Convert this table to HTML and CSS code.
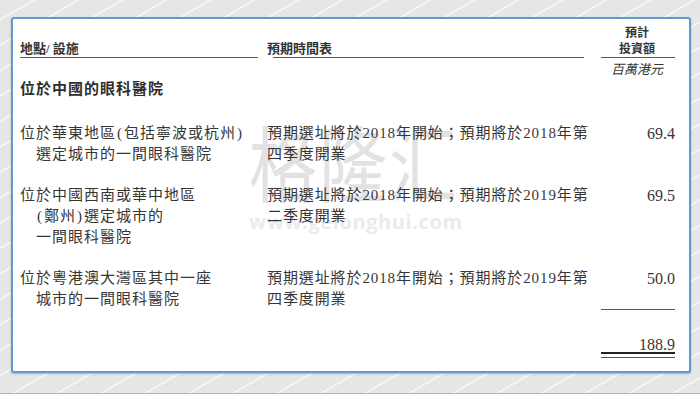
FILE: index.html
```html
<!DOCTYPE html>
<html lang="zh-Hant">
<head>
<meta charset="utf-8">
<title>眼科醫院投資計劃</title>
<link rel="stylesheet" href="styles.css">
</head>
<body>
<div class="card">
  <div class="watermark" aria-hidden="true">
    <div class="wm-cn">格隆汇</div>
    <div class="wm-url">www.gelonghui.com</div>
  </div>
  <div class="table">
    <div class="c1 head">地點/ 設施</div>
    <div class="c2 head head-shift">預期時間表</div>
    <div class="c3 head head-amt">預計<br>投資額</div>

    <div class="c3 unit">百萬港元</div>

    <div class="section">位於中國的眼科醫院</div>

    <div class="c1 loc">位於華東地區<span class="par">(</span>包括寧波或杭州<span class="par">)</span><br>選定城市的一間眼科醫院</div>
    <div class="c2 plan">預期選址將於2018年開始；預期將於2018年第<br>四季度開業</div>
    <div class="c3 amt">69.4</div>

    <div class="c1 loc gap">位於中國西南或華中地區<br><span class="par">(</span>鄭州<span class="par">)</span>選定城市的<br>一間眼科醫院</div>
    <div class="c2 plan gap">預期選址將於2018年開始；預期將於2019年第<br>二季度開業</div>
    <div class="c3 amt gap">69.5</div>

    <div class="c1 loc gap">位於粵港澳大灣區其中一座<br>城市的一間眼科醫院</div>
    <div class="c2 plan gap">預期選址將於2018年開始；預期將於2019年第<br>四季度開業</div>
    <div class="c3 amt gap subtotal">50.0</div>

    <div class="c3 amt total">188.9</div>
  </div>
</div>
</body>
</html>
```

FILE: styles.css
```css
html, body {
  margin: 0;
  padding: 0;
}

body {
  width: 700px;
  height: 394px;
  box-sizing: border-box;
  overflow: hidden;
  border-bottom: 1px solid #b4b4b4;
  background-color: #e6e6e6;
  background-image: repeating-linear-gradient(150deg, rgba(255,255,255,0) 0px, rgba(255,255,255,0) 16px, rgba(255,255,255,0.85) 17px, rgba(255,255,255,0) 18.5px, rgba(255,255,255,0) 22px);
  padding-top: 17px;
  padding-left: 11px;
  font-family: "Liberation Serif", "Noto Sans CJK TC", serif;
  color: #363636;
}

.card {
  position: relative;
  width: 680px;
  height: 356px;
  box-sizing: border-box;
  background: #ffffff;
  border: 2px solid #5e9bd6;
  border-radius: 3px;
  box-shadow: 0 1px 2px rgba(0,0,0,0.25);
  padding: 6px 14px 0 7px;
}

.watermark {
  position: absolute;
  left: 236px;
  top: 100px;
  z-index: 0;
  color: #e2e2e2;
  font-family: "Noto Sans CJK SC", sans-serif;
}

.wm-cn {
  font-size: 68px;
  font-weight: 400;
  line-height: 68px;
  letter-spacing: 2px;
  transform: scaleY(1.22);
  transform-origin: left top;
  white-space: nowrap;
}

.wm-url {
  font-family: "Open Sans", "DejaVu Sans", sans-serif;
  font-size: 20px;
  font-weight: 700;
  line-height: 22px;
  letter-spacing: 0.6px;
  color: #ebebeb;
  margin-top: 24px;
}

.table {
  position: relative;
  z-index: 1;
  display: grid;
  grid-template-columns: 247px 334px 74px;
  white-space: nowrap;
}

.c1 { grid-column: 1; margin-right: 9px; }
.c2 { grid-column: 2; margin-right: 17px; }
.c3 { grid-column: 3; }

.head {
  font-size: 13px;
  font-weight: 700;
  line-height: 16px;
  align-self: end;
  border-bottom: 1px solid #5a5a5a;
  color: #333;
}

.head-shift {
  margin-left: 6px;
  text-indent: -6px;
}

.head-amt {
  font-size: 12px;
  text-align: center;
  padding-right: 2px;
}

.unit {
  font-size: 13px;
  font-style: italic;
  line-height: 16px;
  margin-top: 4px;
  text-align: center;
  padding-right: 2px;
}

.section {
  grid-column: 1 / 3;
  font-size: 15px;
  font-weight: 700;
  letter-spacing: 1px;
  line-height: 20px;
  margin-top: 1px;
  color: #2e2e2e;
}

.loc, .plan, .amt {
  line-height: 21px;
  margin-top: 24px;
}

.gap {
  margin-top: 20px;
}

.loc {
  font-size: 15px;
  letter-spacing: 1px;
  padding-left: 16px;
  text-indent: -16px;
}

.par {
  margin: 0 1px;
}

.plan {
  font-size: 15px;
  letter-spacing: 0.9px;
}

.amt {
  font-size: 16px;
  text-align: right;
}

.subtotal {
  border-bottom: 1px solid #5a5a5a;
}

.total {
  margin-top: 25px;
  line-height: 20px;
  border-bottom: 2px solid #222;
}

.total::after {
  content: "";
  display: block;
  height: 0;
  border-bottom: 1px solid #555;
  margin-bottom: -4px;
  transform: translateY(2px);
}
```
